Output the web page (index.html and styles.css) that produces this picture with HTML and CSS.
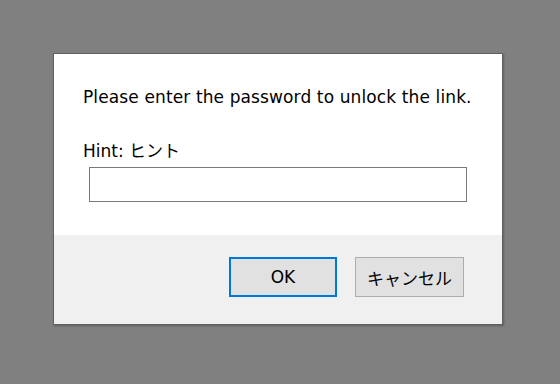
FILE: index.html
```html
<!DOCTYPE html>
<html lang="ja">
<head>
  <meta charset="UTF-8">
  <title>Password</title>
  <link rel="stylesheet" href="styles.css">
</head>
<body>

  <div class="dialog">
    <div class="content">
      <p class="message">Please enter the password to unlock the link.</p>
      <label class="hint" for="password">Hint: ヒント</label>
      <input type="password" id="password" class="password">
    </div>
    <div class="footer">
      <button class="btn btn-default">OK</button>
      <button class="btn">キャンセル</button>
    </div>
  </div>

</body>
</html>
```

FILE: styles.css
```css
body {
  margin: 0;
  padding: 53px 0 0 53px;
  height: 384px;
  box-sizing: border-box;
  background-color: #808080;
  font-family: "DejaVu Sans", "Noto Sans CJK JP", sans-serif;
  font-size: 17px;
  color: #000;
}
.dialog {
  width: 450px;
  height: 272px;
  box-sizing: border-box;
  border: 1px solid #5f5f5f;
  background-color: #fff;
  box-shadow: 1px 1px 2px rgba(0, 0, 0, 0.25);
  display: flex;
  flex-direction: column;
}
.content {
  height: 181px;
  box-sizing: border-box;
  padding: 33px 29px 0;
}
.message {
  margin: 0 0 34px;
  line-height: 20px;
  letter-spacing: 0.12px;
}
.hint {
  display: block;
  line-height: 20px;
  margin-bottom: 6px;
}
.password {
  display: block;
  width: 378px;
  height: 35px;
  box-sizing: border-box;
  margin-left: 6px;
  border: 1px solid #7a7a7a;
  padding: 0 4px;
  outline: none;
}
.footer {
  flex: 1;
  background-color: #f0f0f0;
  display: flex;
  justify-content: flex-end;
  align-items: flex-start;
  gap: 18px;
  padding: 22px 38px 0 0;
}
.btn {
  width: 109px;
  height: 40px;
  box-sizing: border-box;
  background-color: #e1e1e1;
  border: 1px solid #adadad;
  font-family: inherit;
  font-size: 17px;
  color: #000;
  padding: 0;
}
.btn-default {
  width: 108px;
  border: 2px solid #0078d7;
}
```
